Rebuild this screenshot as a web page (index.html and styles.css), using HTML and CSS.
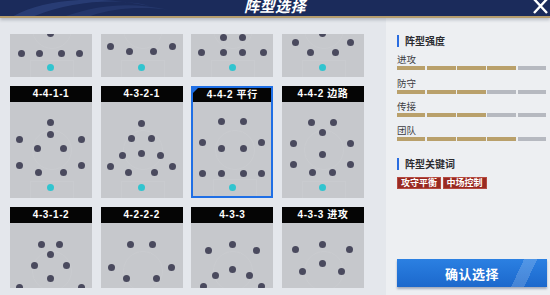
FILE: index.html
```html
<!DOCTYPE html>
<html lang="zh">
<head>
<meta charset="utf-8">
<link rel="stylesheet" href="styles.css">
</head>
<body>
<header class="topbar">
  <svg class="swoosh" width="200" height="16" viewBox="0 0 200 16">
    <path d="M10 18 C40 0 90 -6 150 6 C120 -2 70 0 30 18 Z" fill="#2c417a" opacity="0.8"/>
    <path d="M60 18 C100 4 130 2 170 10 C140 6 110 8 85 18 Z" fill="#283c72" opacity="0.7"/>
  </svg>
  <h1 class="title">阵型选择</h1>
  <svg class="close" width="15" height="14" viewBox="0 0 15 14">
    <path d="M1 -1 L14 13 M14 -1 L1 13" stroke="#fff" stroke-width="2.4" fill="none"/>
  </svg>
</header>
<main class="main">
  <section class="list">
    <div class="viewport">
      <div class="grid">
        <div class="card">
          <div class="card-head">4-5-1</div>
          <div class="field">
            <span class="dot" style="left:40px;top:52px"></span>
            <span class="dot" style="left:11px;top:72px"></span>
            <span class="dot" style="left:29px;top:72px"></span>
            <span class="dot" style="left:51px;top:72px"></span>
            <span class="dot" style="left:69px;top:72px"></span>
            <span class="dot gk" style="left:40px;top:86px"></span>
          </div>
        </div>
        <div class="card">
          <div class="card-head">4-1-4-1</div>
          <div class="field">
            <span class="dot" style="left:10px;top:65px"></span>
            <span class="dot" style="left:72px;top:65px"></span>
            <span class="dot" style="left:29px;top:70px"></span>
            <span class="dot" style="left:53px;top:70px"></span>
            <span class="dot gk" style="left:41px;top:86px"></span>
          </div>
        </div>
        <div class="card">
          <div class="card-head">4-2-3-1</div>
          <div class="field">
            <span class="dot" style="left:32px;top:56px"></span>
            <span class="dot" style="left:51px;top:56px"></span>
            <span class="dot" style="left:10px;top:71px"></span>
            <span class="dot" style="left:32px;top:71px"></span>
            <span class="dot" style="left:51px;top:71px"></span>
            <span class="dot" style="left:72px;top:71px"></span>
            <span class="dot gk" style="left:41px;top:86px"></span>
          </div>
        </div>
        <div class="card">
          <div class="card-head">4-1-2-1-2</div>
          <div class="field">
            <span class="dot" style="left:41px;top:52px"></span>
            <span class="dot" style="left:14px;top:61px"></span>
            <span class="dot" style="left:69px;top:61px"></span>
            <span class="dot" style="left:29px;top:71px"></span>
            <span class="dot" style="left:54px;top:71px"></span>
            <span class="dot gk" style="left:41px;top:86px"></span>
          </div>
        </div>

        <div class="card">
          <div class="card-head">4-4-1-1</div>
          <div class="field">
            <span class="dot" style="left:40px;top:20px"></span>
            <span class="dot" style="left:40px;top:32px"></span>
            <span class="dot" style="left:9px;top:37px"></span>
            <span class="dot" style="left:71px;top:37px"></span>
            <span class="dot" style="left:27px;top:46px"></span>
            <span class="dot" style="left:53px;top:46px"></span>
            <span class="dot" style="left:9px;top:63px"></span>
            <span class="dot" style="left:71px;top:63px"></span>
            <span class="dot" style="left:28px;top:70px"></span>
            <span class="dot" style="left:53px;top:70px"></span>
            <span class="dot gk" style="left:40px;top:85px"></span>
          </div>
        </div>
        <div class="card">
          <div class="card-head">4-3-2-1</div>
          <div class="field">
            <span class="dot" style="left:41px;top:21px"></span>
            <span class="dot" style="left:31px;top:36px"></span>
            <span class="dot" style="left:51px;top:36px"></span>
            <span class="dot" style="left:22px;top:53px"></span>
            <span class="dot" style="left:41px;top:51px"></span>
            <span class="dot" style="left:60px;top:53px"></span>
            <span class="dot" style="left:10px;top:64px"></span>
            <span class="dot" style="left:72px;top:64px"></span>
            <span class="dot" style="left:28px;top:70px"></span>
            <span class="dot" style="left:54px;top:70px"></span>
            <span class="dot gk" style="left:41px;top:85px"></span>
          </div>
        </div>
        <div class="card selected">
          <div class="card-head">4-4-2 平行</div>
          <div class="field">
            <span class="dot" style="left:30px;top:19px"></span>
            <span class="dot" style="left:52px;top:19px"></span>
            <span class="dot" style="left:11px;top:40px"></span>
            <span class="dot" style="left:30px;top:46px"></span>
            <span class="dot" style="left:52px;top:46px"></span>
            <span class="dot" style="left:70px;top:40px"></span>
            <span class="dot" style="left:11px;top:71px"></span>
            <span class="dot" style="left:30px;top:71px"></span>
            <span class="dot" style="left:52px;top:71px"></span>
            <span class="dot" style="left:70px;top:71px"></span>
            <span class="dot gk" style="left:41px;top:85px"></span>
          </div>
        </div>
        <div class="card">
          <div class="card-head">4-4-2 边路</div>
          <div class="field">
            <span class="dot" style="left:30px;top:20px"></span>
            <span class="dot" style="left:52px;top:20px"></span>
            <span class="dot" style="left:41px;top:30px"></span>
            <span class="dot" style="left:12px;top:41px"></span>
            <span class="dot" style="left:69px;top:41px"></span>
            <span class="dot" style="left:41px;top:52px"></span>
            <span class="dot" style="left:12px;top:62px"></span>
            <span class="dot" style="left:69px;top:62px"></span>
            <span class="dot" style="left:31px;top:70px"></span>
            <span class="dot" style="left:51px;top:70px"></span>
            <span class="dot gk" style="left:41px;top:85px"></span>
          </div>
        </div>

        <div class="card">
          <div class="card-head">4-3-1-2</div>
          <div class="field">
            <span class="dot" style="left:31px;top:21px"></span>
            <span class="dot" style="left:49px;top:21px"></span>
            <span class="dot" style="left:40px;top:31px"></span>
            <span class="dot" style="left:24px;top:42px"></span>
            <span class="dot" style="left:56px;top:42px"></span>
            <span class="dot" style="left:40px;top:55px"></span>
            <span class="dot" style="left:9px;top:64px"></span>
            <span class="dot" style="left:71px;top:64px"></span>
            <span class="dot" style="left:28px;top:71px"></span>
            <span class="dot" style="left:53px;top:71px"></span>
            <span class="dot gk" style="left:40px;top:85px"></span>
          </div>
        </div>
        <div class="card">
          <div class="card-head">4-2-2-2</div>
          <div class="field">
            <span class="dot" style="left:30px;top:21px"></span>
            <span class="dot" style="left:52px;top:21px"></span>
            <span class="dot" style="left:11px;top:44px"></span>
            <span class="dot" style="left:71px;top:44px"></span>
            <span class="dot" style="left:26px;top:55px"></span>
            <span class="dot" style="left:56px;top:55px"></span>
            <span class="dot" style="left:11px;top:72px"></span>
            <span class="dot" style="left:30px;top:74px"></span>
            <span class="dot" style="left:52px;top:74px"></span>
            <span class="dot" style="left:71px;top:72px"></span>
            <span class="dot gk" style="left:41px;top:85px"></span>
          </div>
        </div>
        <div class="card">
          <div class="card-head">4-3-3</div>
          <div class="field">
            <span class="dot" style="left:41px;top:21px"></span>
            <span class="dot" style="left:17px;top:27px"></span>
            <span class="dot" style="left:65px;top:27px"></span>
            <span class="dot" style="left:41px;top:46px"></span>
            <span class="dot" style="left:24px;top:52px"></span>
            <span class="dot" style="left:58px;top:52px"></span>
            <span class="dot" style="left:12px;top:63px"></span>
            <span class="dot" style="left:70px;top:63px"></span>
            <span class="dot" style="left:30px;top:71px"></span>
            <span class="dot" style="left:52px;top:71px"></span>
            <span class="dot gk" style="left:41px;top:85px"></span>
          </div>
        </div>
        <div class="card">
          <div class="card-head">4-3-3 进攻</div>
          <div class="field">
            <span class="dot" style="left:14px;top:26px"></span>
            <span class="dot" style="left:41px;top:21px"></span>
            <span class="dot" style="left:68px;top:26px"></span>
            <span class="dot" style="left:41px;top:40px"></span>
            <span class="dot" style="left:21px;top:48px"></span>
            <span class="dot" style="left:60px;top:48px"></span>
            <span class="dot" style="left:11px;top:70px"></span>
            <span class="dot" style="left:30px;top:72px"></span>
            <span class="dot" style="left:52px;top:72px"></span>
            <span class="dot" style="left:71px;top:70px"></span>
            <span class="dot gk" style="left:41px;top:85px"></span>
          </div>
        </div>
      </div>
    </div>
  </section>

  <aside class="panel">
    <h2 class="sec-title">阵型强度</h2>
    <div class="stat">
      <div class="stat-label">进攻</div>
      <div class="bar"><i class="on"></i><i class="on"></i><i class="on"></i><i class="on"></i><i></i></div>
    </div>
    <div class="stat">
      <div class="stat-label">防守</div>
      <div class="bar"><i class="on"></i><i class="on"></i><i class="on"></i><i></i><i></i></div>
    </div>
    <div class="stat">
      <div class="stat-label">传接</div>
      <div class="bar"><i class="on"></i><i class="on"></i><i class="on"></i><i></i><i></i></div>
    </div>
    <div class="stat">
      <div class="stat-label">团队</div>
      <div class="bar"><i class="on"></i><i class="on"></i><i class="on"></i><i class="on"></i><i></i></div>
    </div>
    <h2 class="sec-title sec-keys">阵型关键词</h2>
    <div class="tags">
      <span class="tag">攻守平衡</span>
      <span class="tag">中场控制</span>
    </div>
    <button class="confirm">确认选择</button>
  </aside>
</main>
</body>
</html>
```

FILE: styles.css
```css
* { box-sizing: border-box; margin: 0; padding: 0; }

html, body {
  width: 550px;
  height: 295px;
  overflow: hidden;
}

body {
  background: #e4e7ec;
  font-family: "Liberation Sans", "Noto Sans CJK SC", sans-serif;
  color: #2a2a2e;
}

.topbar {
  position: relative;
  z-index: 2;
  height: 18px;
  background: #1b2b5b;
  border-bottom: 2px solid #b69d6d;
  box-shadow: 0 2px 3px rgba(40, 50, 70, 0.25);
  display: flex;
  justify-content: center;
  overflow: hidden;
}

.swoosh {
  position: absolute;
  left: 0;
  top: 0;
}

.title {
  position: relative;
  margin-top: -3px;
  font-family: "Noto Sans CJK SC", sans-serif;
  font-size: 15px;
  line-height: 18px;
  font-weight: 700;
  font-style: italic;
  color: #ffffff;
  letter-spacing: 0.5px;
}

.close {
  position: absolute;
  right: 2px;
  top: 0;
}

.main {
  display: flex;
  height: 277px;
}

.list {
  width: 386px;
  padding: 16px 0 0 10px;
}

.viewport {
  height: 254px;
  overflow: hidden;
}

.grid {
  margin-top: -69px;
  display: grid;
  grid-template-columns: repeat(4, 82px);
  column-gap: 8.67px;
  row-gap: 9px;
}

.card {
  position: relative;
  height: 112px;
  display: flex;
  flex-direction: column;
}

.card-head {
  height: 16px;
  background: #050505;
  color: #ffffff;
  font-family: "Liberation Sans", "Noto Sans CJK SC", sans-serif;
  font-size: 10px;
  font-weight: 700;
  line-height: 16px;
  text-align: center;
  letter-spacing: 0.6px;
}

.field {
  position: relative;
  flex: 1;
  background: #c6c8cc;
  overflow: hidden;
}

.field::before {
  content: "";
  position: absolute;
  left: 22px;
  top: 28px;
  width: 38px;
  height: 38px;
  border: 1px solid rgba(255, 255, 255, 0.06);
  border-radius: 50%;
}

.field::after {
  content: "";
  position: absolute;
  left: 20px;
  bottom: -1px;
  width: 42px;
  height: 16px;
  border: 1px solid rgba(255, 255, 255, 0.06);
}

.selected {
  outline: 2px solid #1f6fe5;
  outline-offset: -2px;
}

.selected .card-head {
  border: 2px solid #1f6fe5;
  border-bottom: 0;
  line-height: 14px;
  position: relative;
}

.selected .card-head::before {
  content: "";
  position: absolute;
  left: 0;
  top: 0;
  border-top: 5px solid #1f6fe5;
  border-right: 5px solid transparent;
}

.selected .field {
  border: 2px solid #1f6fe5;
  border-top: 0;
}

.dot {
  position: absolute;
  width: 7px;
  height: 7px;
  margin: -3.5px 0 0 -3.5px;
  border-radius: 50%;
  background: #4a4a5e;
  z-index: 1;
}

.selected .dot {
  margin-left: -5.5px;
}

.dot.gk {
  background: #31c4cf;
}

.panel {
  flex: 1;
  background: #edeff2;
  padding: 17px 3px 8px 11px;
  display: flex;
  flex-direction: column;
}

.sec-title {
  font-family: "Noto Sans CJK SC", sans-serif;
  font-size: 10px;
  line-height: 12px;
  font-weight: 700;
  color: #2b2b30;
  padding-left: 6px;
  border-left: 2px solid #2a6de0;
  height: 12px;
  display: flex;
  align-items: center;
}

.stat {
  padding-bottom: 6.5px;
}

.stat:first-of-type {
  margin-top: 6px;
}

.stat-label {
  font-family: "Noto Sans CJK SC", sans-serif;
  font-size: 9.5px;
  line-height: 12px;
  color: #3c3c42;
}

.bar {
  display: flex;
  gap: 1.7px;
  margin-top: 1px;
  width: 149px;
  height: 4px;
}

.bar i {
  flex: 1;
  background: #b6b9c0;
}

.bar i.on {
  background: #b9a06b;
}

.sec-keys {
  margin-top: 10.5px;
}

.tags {
  display: flex;
  gap: 1.5px;
  margin-top: 7px;
}

.tag {
  height: 12px;
  padding: 0 3px;
  background: #992a22;
  border: 1px solid #b5493f;
  color: #ffffff;
  font-family: "Noto Sans CJK SC", sans-serif;
  font-size: 9px;
  line-height: 10px;
  font-weight: 700;
}

.confirm {
  margin-top: auto;
  width: 150px;
  height: 28px;
  border: 0;
  background:
    linear-gradient(115deg, transparent 0 78%, rgba(255, 255, 255, 0.18) 78% 86%, transparent 86%),
    linear-gradient(180deg, #2b80e2, #1c68cc);
  box-shadow: 0 2px 2px rgba(30, 50, 90, 0.35);
  color: #ffffff;
  font-family: "Noto Sans CJK SC", sans-serif;
  font-size: 13px;
  font-weight: 700;
  letter-spacing: 0.5px;
}
```
